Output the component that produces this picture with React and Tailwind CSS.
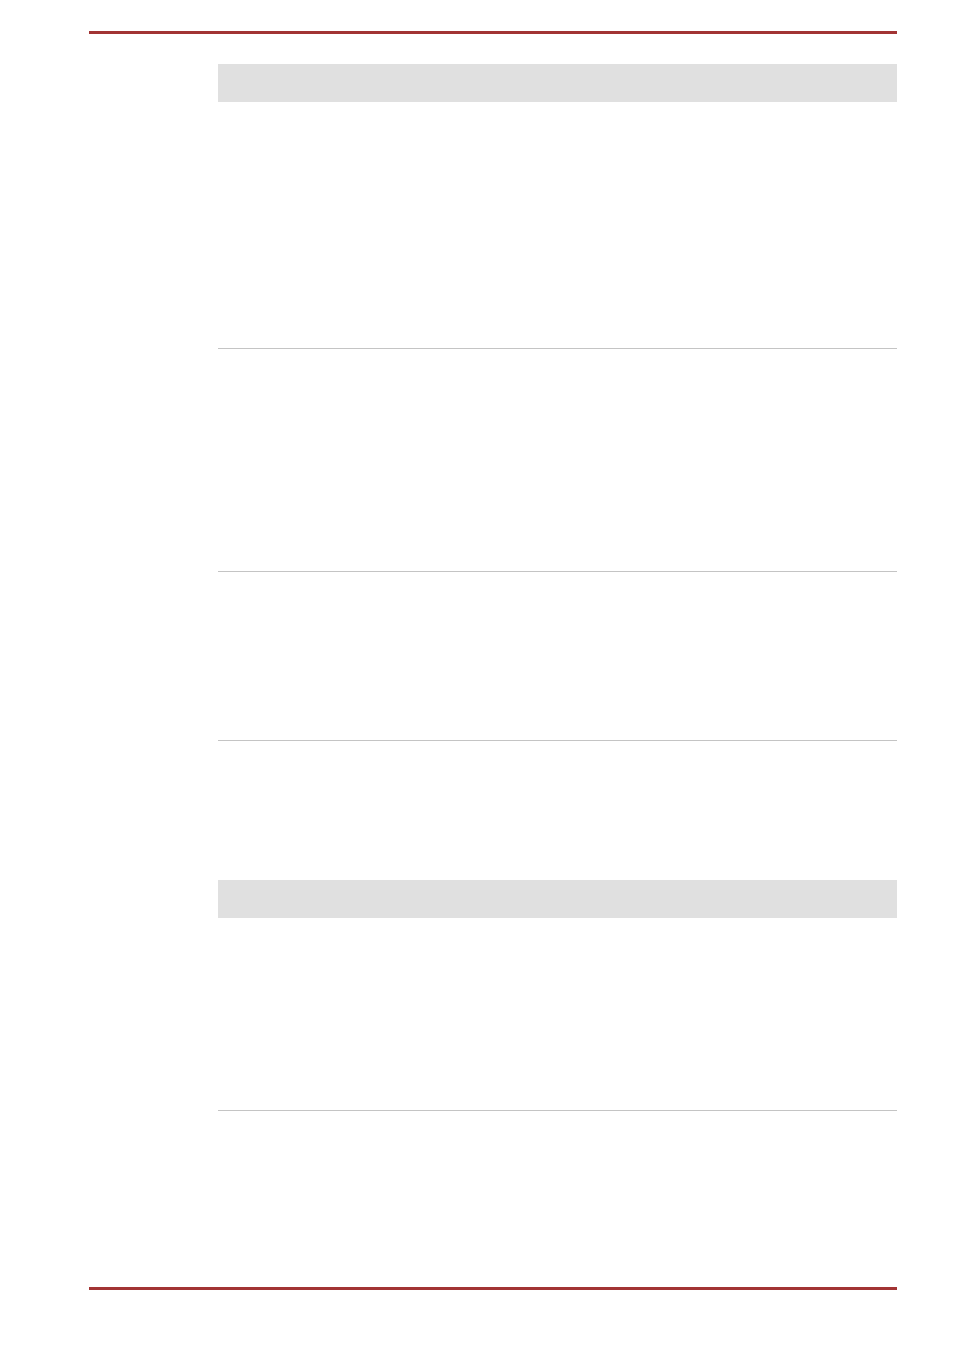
const sections = [
  { rows: [247, 223, 169] },
  { rows: [193] },
];

export default function App() {
  return (
    <div className="min-h-[1346px] bg-white pt-[31px]" style={{ fontFamily: '"Liberation Sans", Arial, sans-serif' }}>
      {/* top rule */}
      <div className="ml-[89px] w-[808px] h-[3px] bg-[#a23434]" />

      <div className="ml-[218px] w-[679px]">
        {/* first table */}
        <div className="mt-[30px]">
          <div className="h-[38px] bg-[#e0e0e0]" />
          {sections[0].rows.map((h, i) => (
            <div key={i} className="border-b border-[#c4c4c4]" style={{ height: h }} />
          ))}
        </div>

        {/* second table */}
        <div className="mt-[139px]">
          <div className="h-[38px] bg-[#e0e0e0]" />
          {sections[1].rows.map((h, i) => (
            <div key={i} className="border-b border-[#c4c4c4]" style={{ height: h }} />
          ))}
        </div>
      </div>

      {/* bottom rule */}
      <div className="mt-[176px] ml-[89px] w-[808px] h-[3px] bg-[#a23434]" />
    </div>
  );
}
